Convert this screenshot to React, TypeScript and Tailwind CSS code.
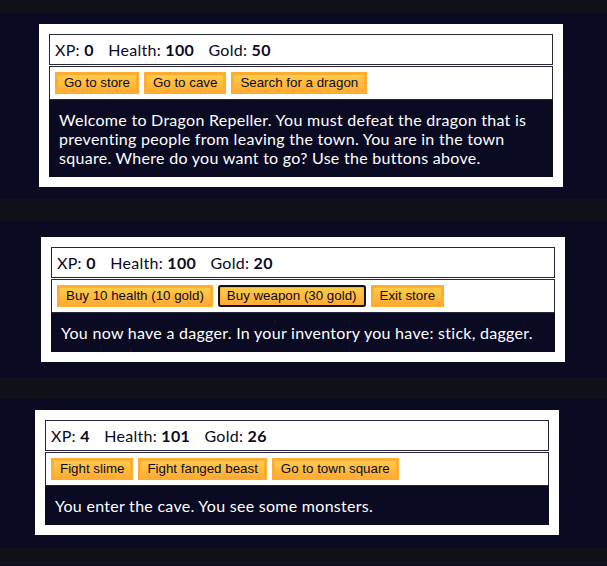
type Game = {
  xp: number;
  health: number;
  gold: number;
  buttons: string[];
  focused?: number;
  text: string;
  offset: string;
  pad: string;
};

const GAMES: Game[] = [
  {
    xp: 0,
    health: 100,
    gold: 50,
    buttons: ['Go to store', 'Go to cave', 'Search for a dragon'],
    text: 'Welcome to Dragon Repeller. You must defeat the dragon that is preventing people from leaving the town. You are in the town square. Where do you want to go? Use the buttons above.',
    offset: 'ml-[39px]',
    pad: 'pt-[11px] pb-[12px]',
  },
  {
    xp: 0,
    health: 100,
    gold: 20,
    buttons: ['Buy 10 health (10 gold)', 'Buy weapon (30 gold)', 'Exit store'],
    focused: 1,
    text: 'You now have a dagger. In your inventory you have: stick, dagger.',
    offset: 'ml-[41px]',
    pad: 'pt-[16px] pb-[15px]',
  },
  {
    xp: 4,
    health: 101,
    gold: 26,
    buttons: ['Fight slime', 'Fight fanged beast', 'Go to town square'],
    text: 'You enter the cave. You see some monsters.',
    offset: 'ml-[35px]',
    pad: 'pt-[11px] pb-[13px]',
  },
];

function Band({ h }: { h: string }) {
  return <div className={`${h} bg-[#0e1118]`} />;
}

function GameCard({ game }: { game: Game }) {
  return (
    <div className={`${game.pad} bg-[#0a0a23]`}>
      <div className={`${game.offset} w-[524px] bg-white p-[10px]`}>
        {/* Stats */}
        <div className="border border-[#26263c] px-[5px] py-[5px] text-[16px] leading-[19px] tracking-[0.28px] text-[#0a0a23]">
          <span className="pr-[10px]">
            XP: <strong>{game.xp}</strong>
          </span>{' '}
          <span className="pr-[10px]">
            Health: <strong>{game.health}</strong>
          </span>{' '}
          <span>
            Gold: <strong>{game.gold}</strong>
          </span>
        </div>

        {/* Controls */}
        <div className="mt-px flex gap-[5px] border border-[#26263c] p-[5px]">
          {game.buttons.map((label, i) => (
            <button
              key={label}
              className={`border-[3px] border-[#feac32] bg-gradient-to-b from-[#fecc4c] to-[#ffac33] px-[6px] py-px font-['Liberation_Sans',Arial,sans-serif] text-[13.33px] leading-[14px] text-[#0a0a23] ${
                game.focused === i ? 'rounded-[3px] outline-2 -outline-offset-2 outline-[#141414]' : ''
              }`}
            >
              {label}
            </button>
          ))}
        </div>

        {/* Text */}
        <div className="bg-[#0a0a23] p-[10px] text-[16px] leading-[19px] tracking-[0.28px] text-white">
          {game.text}
        </div>
      </div>
    </div>
  );
}

export default function App() {
  return (
    <div className="h-[566px] w-[607px] overflow-hidden bg-[#0a0a23] font-['Lato','Noto_Sans',sans-serif]">
      <Band h="h-[13px]" />
      <GameCard game={GAMES[0]} />
      <Band h="h-[22px]" />
      <GameCard game={GAMES[1]} />
      <Band h="h-[22px]" />
      <GameCard game={GAMES[2]} />
      <Band h="h-[17px]" />
    </div>
  );
}
